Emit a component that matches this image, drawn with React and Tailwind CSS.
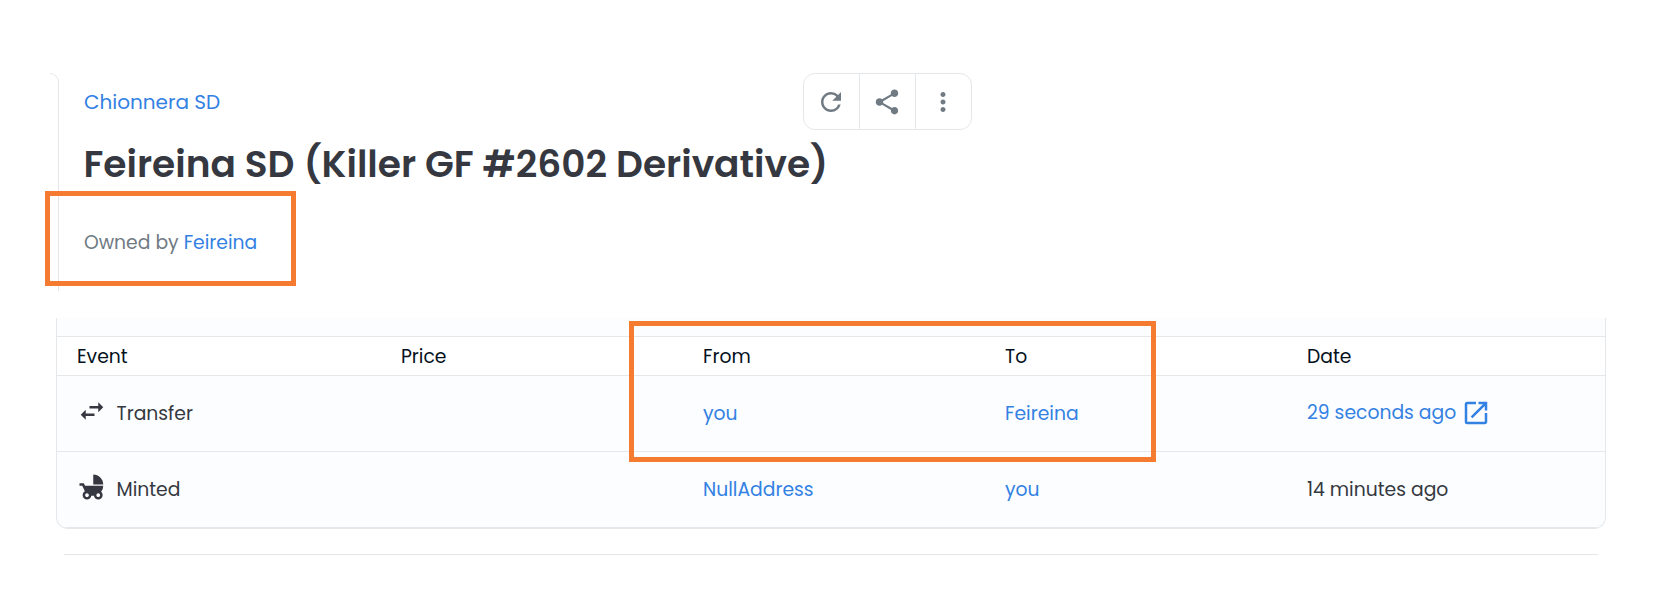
import { MdRefresh, MdShare, MdMoreVert, MdSwapHoriz, MdChildFriendly, MdOpenInNew } from "react-icons/md";

const link = "text-[#3381e3]";
const row = "grid grid-cols-[324px_302px_302px_302px_1fr] items-center border-b border-[#e5e8eb] pl-5";

function ItemHeader() {
  return (
    <section className="ml-[50px] flex h-[218px]">
      <div className="w-[9px] shrink-0 rounded-tr-[9px] border-t border-r border-[#e5e8eb]" />
      <div className="ml-[25px] flex flex-col whitespace-nowrap">
        <div className="flex h-[57px] w-[888px] items-center justify-between">
          <a className={`text-[20px] leading-[30px] ${link}`}>Chionnera SD</a>
          <div className="flex h-[57px] divide-x divide-[#e5e8eb] rounded-xl border border-[#e5e8eb] text-[30px] text-[#707a83]">
            <button className="flex w-14 items-center justify-center pr-px"><MdRefresh /></button>
            <button className="flex w-14 items-center justify-center pr-px"><MdShare /></button>
            <button className="flex w-[55px] items-center justify-center pr-px"><MdMoreVert /></button>
          </div>
        </div>
        <h1 className="mt-[11px] -ml-[0.5px] text-[37.5px] leading-[46px] font-semibold text-[#353840]">
          Feireina SD (Killer GF #2602 Derivative)
        </h1>
        <p className="mt-[42px] text-[18.75px] leading-[28px] text-[#707a83]">
          Owned by <a className={link}>Feireina</a>
        </p>
      </div>
    </section>
  );
}

function ActivityTable() {
  return (
    <section className="mt-[27px] ml-14 h-[211px] w-[1550px] overflow-hidden rounded-b-xl border border-t-0 border-[#e5e8eb] bg-[#fbfdff] text-[18.75px] leading-[24px] whitespace-nowrap text-[#353840]">
      <div className="h-[19px] border-b border-[#e5e8eb]" />
      <div className={`${row} h-[39px] bg-white pt-[2px] text-[#04111d]`}>
        <span>Event</span>
        <span>Price</span>
        <span>From</span>
        <span>To</span>
        <span>Date</span>
      </div>
      <div className={`${row} h-[76px]`}>
        <div className="flex items-center">
          <MdSwapHoriz className="mb-[5px] text-[30px]" />
          <span className="ml-[9.5px]">Transfer</span>
        </div>
        <span />
        <a className={link}>you</a>
        <a className={link}>Feireina</a>
        <a className={`flex items-center ${link}`}>
          <span className="mb-px">29 seconds ago</span>
          <MdOpenInNew className="mb-px ml-[5px] text-[30px]" />
        </a>
      </div>
      <div className={`${row} h-[76px]`}>
        <div className="flex items-center">
          <MdChildFriendly className="mb-[5px] text-[30px]" />
          <span className="ml-[9.5px]">Minted</span>
        </div>
        <span />
        <a className={link}>NullAddress</a>
        <a className={link}>you</a>
        <span>14 minutes ago</span>
      </div>
    </section>
  );
}

export default function App() {
  return (
    <main className="relative h-[591px] w-[1675px] overflow-hidden bg-white pt-[73px] font-['Poppins','Inter',sans-serif]">
      <ItemHeader />
      <ActivityTable />
      <div className="mt-[25px] ml-16 h-px w-[1534px] bg-[#e5e8eb]" />
      <div className="absolute top-[191px] left-[45px] h-[95px] w-[251px] border-5 border-[#f47b30]" />
      <div className="absolute top-[321px] left-[629px] h-[141px] w-[527px] border-5 border-[#f47b30]" />
    </main>
  );
}
